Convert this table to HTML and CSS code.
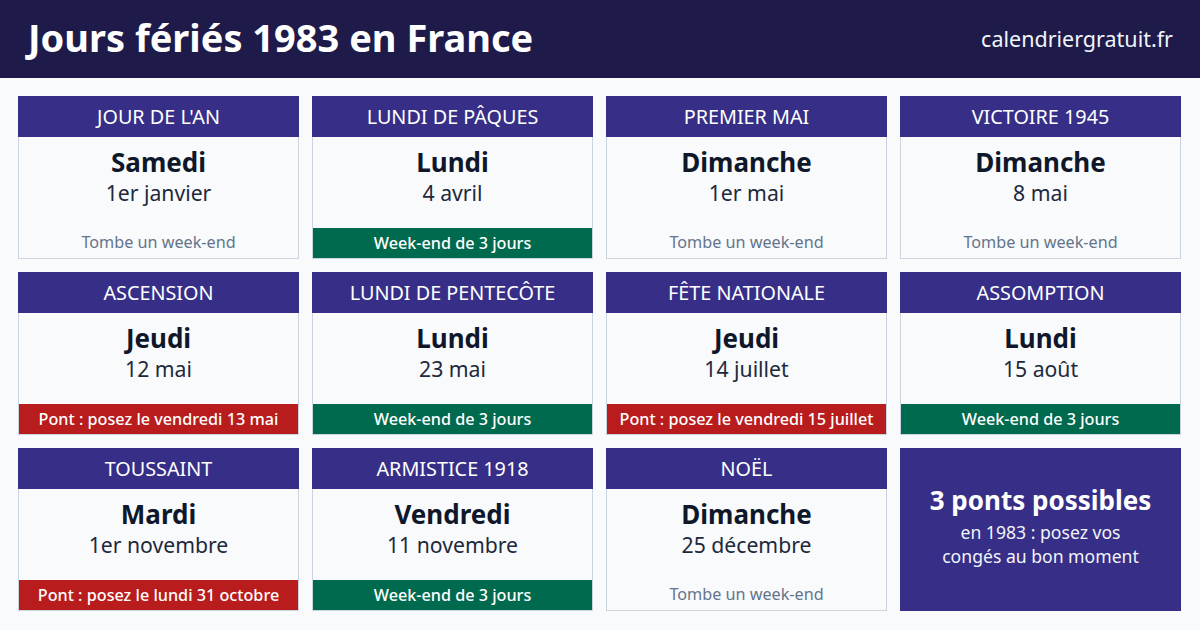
FILE: index.html
```html
<!DOCTYPE html>
<html lang="fr">
<head>
<meta charset="utf-8">
<link rel="stylesheet" href="styles.css">
</head>
<body>
<header class="top">
  <h1 class="title">Jours fériés 1983 en France</h1>
  <div class="site">calendriergratuit.fr</div>
</header>
<main class="grid">
  <div class="card">
    <div class="head">JOUR DE L'AN</div>
    <div class="body"><div class="day">Samedi</div><div class="date">1er janvier</div><div class="foot plain">Tombe un week-end</div></div>
  </div>
  <div class="card">
    <div class="head">LUNDI DE PÂQUES</div>
    <div class="body"><div class="day">Lundi</div><div class="date">4 avril</div><div class="foot green">Week-end de 3 jours</div></div>
  </div>
  <div class="card">
    <div class="head">PREMIER MAI</div>
    <div class="body"><div class="day">Dimanche</div><div class="date">1er mai</div><div class="foot plain">Tombe un week-end</div></div>
  </div>
  <div class="card">
    <div class="head">VICTOIRE 1945</div>
    <div class="body"><div class="day">Dimanche</div><div class="date">8 mai</div><div class="foot plain">Tombe un week-end</div></div>
  </div>
  <div class="card">
    <div class="head">ASCENSION</div>
    <div class="body"><div class="day">Jeudi</div><div class="date">12 mai</div><div class="foot red">Pont : posez le vendredi 13 mai</div></div>
  </div>
  <div class="card">
    <div class="head">LUNDI DE PENTECÔTE</div>
    <div class="body"><div class="day">Lundi</div><div class="date">23 mai</div><div class="foot green">Week-end de 3 jours</div></div>
  </div>
  <div class="card">
    <div class="head">FÊTE NATIONALE</div>
    <div class="body"><div class="day">Jeudi</div><div class="date">14 juillet</div><div class="foot red">Pont : posez le vendredi 15 juillet</div></div>
  </div>
  <div class="card">
    <div class="head">ASSOMPTION</div>
    <div class="body"><div class="day">Lundi</div><div class="date">15 août</div><div class="foot green">Week-end de 3 jours</div></div>
  </div>
  <div class="card">
    <div class="head">TOUSSAINT</div>
    <div class="body"><div class="day">Mardi</div><div class="date">1er novembre</div><div class="foot red">Pont : posez le lundi 31 octobre</div></div>
  </div>
  <div class="card">
    <div class="head">ARMISTICE 1918</div>
    <div class="body"><div class="day">Vendredi</div><div class="date">11 novembre</div><div class="foot green">Week-end de 3 jours</div></div>
  </div>
  <div class="card">
    <div class="head">NOËL</div>
    <div class="body"><div class="day">Dimanche</div><div class="date">25 décembre</div><div class="foot plain">Tombe un week-end</div></div>
  </div>
  <div class="summary">
    <div class="sum-title">3 ponts possibles</div>
    <div class="sum-text">en 1983 : posez vos<br>congés au bon moment</div>
  </div>
</main>
</body>
</html>
```
FILE: styles.css
```css
* { box-sizing: border-box; }
html, body { margin: 0; padding: 0; }
body {
  width: 1200px;
  height: 630px;
  overflow: hidden;
  background: #f8fafc;
  font-family: "Noto Sans", "Open Sans", sans-serif;
  color: #0f172a;
}
.top {
  height: 78px;
  background: #1e1b4b;
  display: flex;
  align-items: center;
  justify-content: space-between;
  padding: 0 27px 0 28px;
  color: #fff;
}
.title {
  margin: 0;
  font-size: 38px;
  font-weight: 700;
  line-height: 1;
  padding-bottom: 4px;
}
.site {
  font-size: 21.5px;
  color: #f1f5f9;
  padding-bottom: 2px;
}
.grid {
  display: grid;
  grid-template-columns: repeat(4, 1fr);
  grid-auto-rows: 163px;
  gap: 13px;
  padding: 18px 19px 0 18px;
}
.card {
  display: flex;
  flex-direction: column;
}
.head {
  height: 41px;
  background: #372f87;
  color: #fff;
  font-size: 19.8px;
  display: flex;
  align-items: center;
  justify-content: center;
  padding-bottom: 1px;
}
.body {
  flex: 1;
  display: flex;
  flex-direction: column;
  align-items: center;
  border: 1px solid #cbd5e1;
  border-top: none;
  padding-top: 8.5px;
}
.day {
  font-size: 26px;
  font-weight: 700;
  line-height: 32px;
}
.date {
  font-size: 21.2px;
  line-height: 30px;
  color: #1e293b;
}
.foot {
  margin-top: auto;
  height: 30px;
  width: 100%;
  display: flex;
  align-items: center;
  justify-content: center;
  font-size: 16.2px;
  font-weight: 500;
  color: #fff;
}
.foot.plain {
  color: #64748b;
  font-weight: 400;
  height: 32px;
}
.foot.green { background: #006a4e; }
.foot.red { background: #b91c1c; }
.summary {
  background: #372f87;
  color: #fff;
  display: flex;
  flex-direction: column;
  align-items: center;
  justify-content: center;
  text-align: center;
  padding-bottom: 10px;
}
.sum-title {
  font-size: 26px;
  font-weight: 700;
  line-height: 36px;
  margin-bottom: 2px;
}
.sum-text {
  font-size: 17.6px;
  line-height: 24px;
  color: #f1f5f9;
}
```
